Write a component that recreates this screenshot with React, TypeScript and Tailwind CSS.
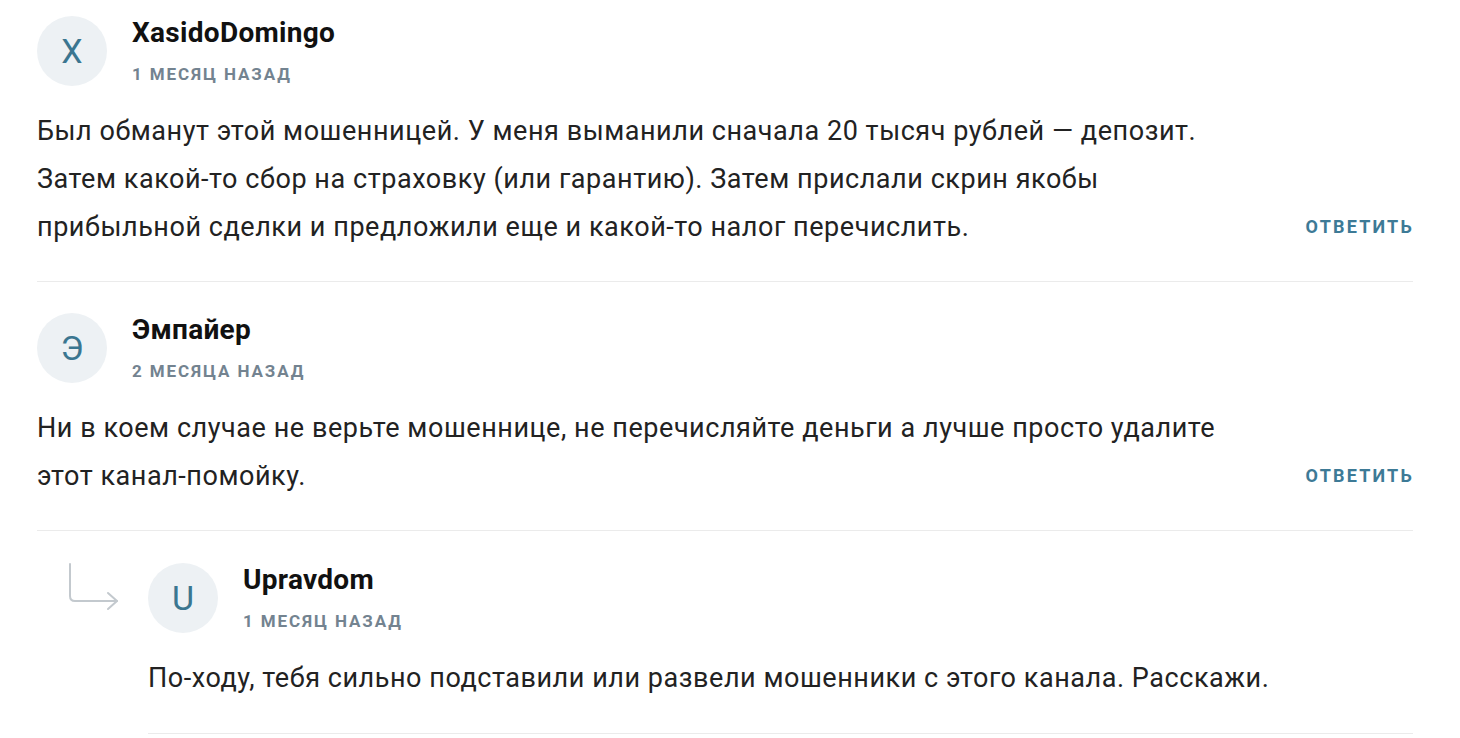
import React from "react";

type C = {
  letter: string;
  name: string;
  date: string;
  lines: string[];
  reply?: boolean;
};

const comments: C[] = [
  {
    letter: "X",
    name: "XasidoDomingo",
    date: "1 месяц назад",
    lines: [
      "Был обманут этой мошенницей. У меня выманили сначала 20 тысяч рублей — депозит.",
      "Затем какой-то сбор на страховку (или гарантию). Затем прислали скрин якобы",
      "прибыльной сделки и предложили еще и какой-то налог перечислить.",
    ],
    reply: true,
  },
  {
    letter: "Э",
    name: "Эмпайер",
    date: "2 месяца назад",
    lines: [
      "Ни в коем случае не верьте мошеннице, не перечисляйте деньги а лучше просто удалите",
      "этот канал-помойку.",
    ],
    reply: true,
  },
];

function Header({ c }: { c: C }) {
  return (
    <div className="flex">
      <div className="w-[70px] h-[70px] rounded-full bg-[#edf1f4] flex items-center justify-center text-[34px] leading-none text-[#3b7690] shrink-0">
        {c.letter}
      </div>
      <div className="ml-[25px] flex flex-col">
        <div className="text-[28px] leading-[34px] font-bold tracking-[0.3px] text-[#111]">{c.name}</div>
        <div className="mt-[14px] text-[17px] leading-[20px] font-bold uppercase tracking-[1.9px] text-[#738390]">
          {c.date}
        </div>
      </div>
    </div>
  );
}

function Body({ c }: { c: C }) {
  return (
    <div className="mt-[21px] flex items-end justify-between">
      <div className="text-[27px] leading-[48px] tracking-[0.55px] text-[#222]">
        {c.lines.map((l, i) => (
          <div key={i} className="whitespace-nowrap">
            {l}
          </div>
        ))}
      </div>
      {c.reply && (
        <div className="text-[18px] leading-[48px] font-bold uppercase tracking-[2.2px] text-[#3d7a96] -mr-[1px]">
          Ответить
        </div>
      )}
    </div>
  );
}

export default function App() {
  return (
    <div
      className="min-h-[738px] w-[1460px] bg-white"
      style={{ fontFamily: "Roboto, 'Noto Sans', sans-serif" }}
    >
      <div className="ml-[37px] w-[1376px]">
        <div className="pt-[16px] pb-[30px] border-b border-[#ebebeb]">
          <Header c={comments[0]} />
          <Body c={comments[0]} />
        </div>
        <div className="pt-[31px] pb-[30px] border-b border-[#ebebeb]">
          <Header c={comments[1]} />
          <Body c={comments[1]} />
        </div>
        <div className="flex">
          <div className="w-[111px] shrink-0 pt-[32px] pl-[30px]">
            <svg width="52" height="50" viewBox="0 0 52 50" fill="none" stroke="#c3c9ce" strokeWidth="2" strokeLinecap="round" strokeLinejoin="round">
              <path d="M3 1 V33 Q3 38 8 38 H50" />
              <path d="M41 30 L50 38 L41 46" />
            </svg>
          </div>
          <div className="flex-1 pt-[32px] pb-[31px] border-b border-[#ebebeb]">
            <Header
              c={{
                letter: "U",
                name: "Upravdom",
                date: "1 месяц назад",
                lines: [],
              }}
            />
            <div className="mt-[21px] text-[27px] leading-[48px] tracking-[0.55px] text-[#222] whitespace-nowrap">
              По-ходу, тебя сильно подставили или развели мошенники с этого канала. Расскажи.
            </div>
          </div>
        </div>
      </div>
    </div>
  );
}
